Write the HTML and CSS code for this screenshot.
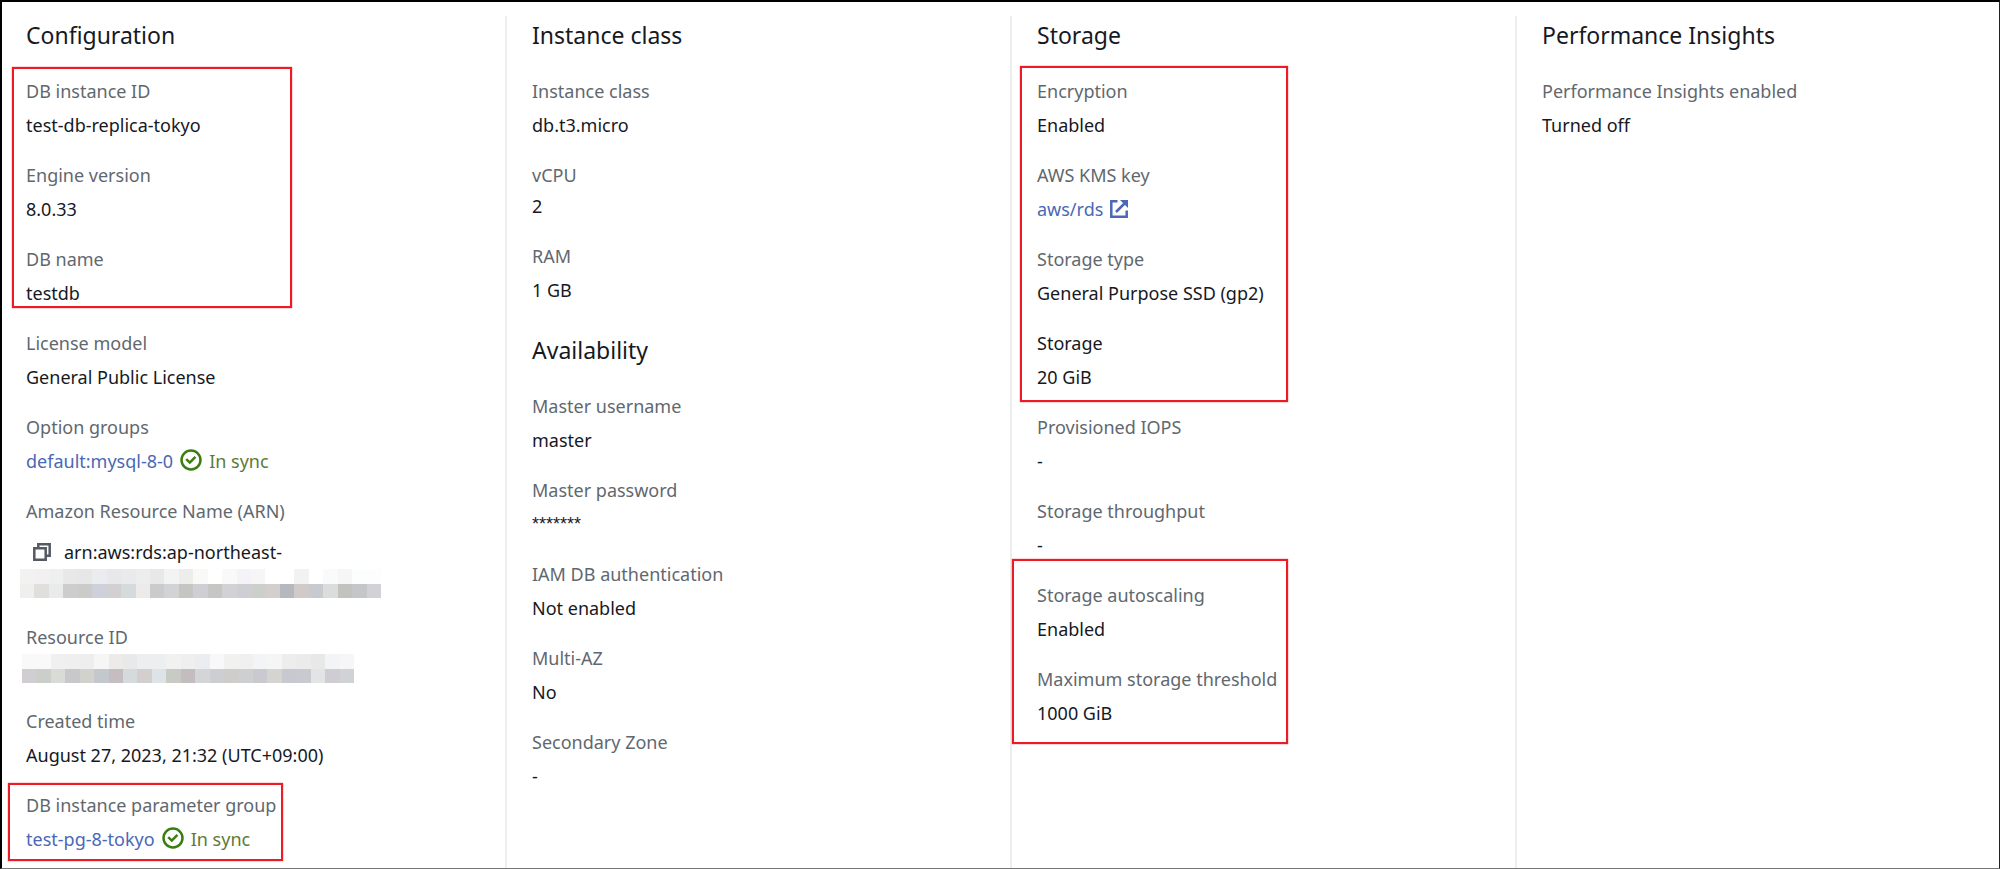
FILE: index.html
```html
<!DOCTYPE html>
<html lang="en">
<head>
    <meta charset="UTF-8">
    <meta name="viewport" content="width=device-width, initial-scale=1.0">
    <title>DB instance configuration</title>
    <link rel="stylesheet" href="styles.css">
</head>
<body>
    <svg class="sprite" aria-hidden="true">
        <symbol id="icon-check" viewBox="0 0 22 22">
            <circle cx="11" cy="11" r="9.5" />
            <path d="M6.2 10.2l3.6 3.4 5.6-5.8" />
        </symbol>
        <symbol id="icon-external" viewBox="0 0 18 18">
            <path d="M7.5 1.3H1.3v15.4h15.4v-6.2M6 12l9-9" />
            <path d="M10 0h8v8z" fill="currentColor" stroke="none" />
        </symbol>
        <symbol id="icon-copy" viewBox="0 0 18 18">
            <path d="M1.3 5.3h11.4v11.4H1.3zM5.3 5V1.3h11.4v11.4H13" />
        </symbol>
    </svg>

    <main class="panel">
        <section class="column">
            <h2>Configuration</h2>
            <dl>
                <div class="group mark mark-instance">
                    <div class="field"><dt>DB instance ID</dt><dd>test-db-replica-tokyo</dd></div>
                    <div class="field"><dt>Engine version</dt><dd>8.0.33</dd></div>
                    <div class="field"><dt>DB name</dt><dd>testdb</dd></div>
                </div>
                <div class="field"><dt>License model</dt><dd>General Public License</dd></div>
                <div class="field">
                    <dt>Option groups</dt>
                    <dd><a href="#">default:mysql-8-0</a><span class="status"><svg class="icon-check"><use href="#icon-check" /></svg>In sync</span></dd>
                </div>
                <div class="field">
                    <dt>Amazon Resource Name (ARN)</dt>
                    <dd class="arn">
                        <span class="arn-text"><button type="button" class="copy" aria-label="Copy ARN"><svg class="icon-copy"><use href="#icon-copy" /></svg></button>arn:aws:rds:ap-northeast-</span>
                        <svg class="mosaic mosaic-arn" id="arnMosaic" aria-hidden="true"></svg>
                    </dd>
                </div>
                <div class="field">
                    <dt>Resource ID</dt>
                    <dd><svg class="mosaic mosaic-id" id="idMosaic" aria-hidden="true"></svg></dd>
                </div>
                <div class="field"><dt>Created time</dt><dd>August 27, 2023, 21:32 (UTC+09:00)</dd></div>
                <div class="group mark mark-params">
                    <div class="field">
                        <dt>DB instance parameter group</dt>
                        <dd><a href="#">test-pg-8-tokyo</a><span class="status"><svg class="icon-check"><use href="#icon-check" /></svg>In sync</span></dd>
                    </div>
                </div>
            </dl>
        </section>

        <section class="column">
            <h2>Instance class</h2>
            <dl>
                <div class="field"><dt>Instance class</dt><dd>db.t3.micro</dd></div>
                <div class="field compact"><dt>vCPU</dt><dd>2</dd></div>
                <div class="field"><dt>RAM</dt><dd>1 GB</dd></div>
            </dl>
            <h2 class="subheading">Availability</h2>
            <dl>
                <div class="field"><dt>Master username</dt><dd>master</dd></div>
                <div class="field"><dt>Master password</dt><dd class="password">*******</dd></div>
                <div class="field"><dt>IAM DB authentication</dt><dd>Not enabled</dd></div>
                <div class="field"><dt>Multi-AZ</dt><dd>No</dd></div>
                <div class="field"><dt>Secondary Zone</dt><dd>-</dd></div>
            </dl>
        </section>

        <section class="column">
            <h2>Storage</h2>
            <dl>
                <div class="group mark mark-storage">
                    <div class="field"><dt>Encryption</dt><dd>Enabled</dd></div>
                    <div class="field">
                        <dt>AWS KMS key</dt>
                        <dd><a href="#" class="external">aws/rds<svg class="icon-external"><use href="#icon-external" /></svg></a></dd>
                    </div>
                    <div class="field"><dt>Storage type</dt><dd>General Purpose SSD (gp2)</dd></div>
                    <div class="field"><dt class="strong">Storage</dt><dd>20 GiB</dd></div>
                </div>
                <div class="field"><dt>Provisioned IOPS</dt><dd>-</dd></div>
                <div class="field"><dt>Storage throughput</dt><dd>-</dd></div>
                <div class="group mark mark-scaling">
                    <div class="field"><dt>Storage autoscaling</dt><dd>Enabled</dd></div>
                    <div class="field"><dt>Maximum storage threshold</dt><dd>1000 GiB</dd></div>
                </div>
            </dl>
        </section>

        <section class="column">
            <h2>Performance Insights</h2>
            <dl>
                <div class="field"><dt>Performance Insights enabled</dt><dd>Turned off</dd></div>
            </dl>
        </section>
    </main>

    <script src="script.js"></script>
</body>
</html>
```
FILE: styles.css
```css
*, *::after {
    box-sizing: border-box;
}
body {
    margin: 0;
    background-color: #ffffff;
    color: #16191f;
    font-family: "Noto Sans", sans-serif;
    font-size: 18px;
    line-height: 28px;
}
.sprite {
    display: none;
}
.panel {
    display: grid;
    grid-template-columns: 505fr 505fr 505fr 482fr;
    min-height: 100vh;
    padding-top: 14px;
    border: 2px solid #000000;
    border-right: 1px solid #222222;
    border-bottom: 1px solid #777777;
}
.column {
    padding-left: 25px;
    border-right: 2px solid #eeeeee;
}
.column:first-child {
    padding-left: 24px;
}
.column:last-child {
    border-right: none;
}
h2 {
    margin: 0 0 23px;
    font-size: 23px;
    font-weight: 400;
    line-height: 38px;
}
.subheading {
    margin-top: 27px;
}
dl, dd {
    margin: 0;
}
dl, .group {
    display: flex;
    flex-direction: column;
    gap: 22px;
}
.field {
    display: flex;
    flex-direction: column;
    gap: 6px;
}
.compact {
    gap: 3px;
}
dt {
    color: #5f686f;
}
.strong {
    color: #16191f;
}
dd {
    height: 28px;
}
a {
    color: #4a68b5;
    text-decoration: none;
}
svg {
    fill: none;
    stroke: currentColor;
    stroke-width: 2.5;
}
.password {
    font-family: "Liberation Sans", Arial, sans-serif;
}
.status {
    color: #5d7a35;
}
.icon-check {
    width: 22px;
    height: 22px;
    margin: 0 7px;
    color: #3c7d12;
    vertical-align: -3px;
}
.icon-external {
    width: 18px;
    height: 18px;
    margin-left: 7px;
    vertical-align: -2px;
}
.arn {
    display: flex;
    flex-direction: column;
    gap: 3px;
    height: 70px;
    padding-top: 7px;
}
.arn-text {
    display: flex;
    align-items: center;
}
.copy {
    display: flex;
    padding: 0 13px 0 7px;
    border: none;
    background: none;
    color: #545b64;
}
.icon-copy {
    width: 18px;
    height: 18px;
}
/* Masked identifiers */
.mosaic {
    display: block;
    height: 29px;
    stroke: none;
}
.mosaic-arn {
    width: 361px;
    margin-left: -6px;
}
.mosaic-id {
    width: 332px;
    margin-top: -3px;
    margin-left: -4px;
}
/* Red marker boxes, drawn over the fields */
.mark {
    position: relative;
}
.mark::after {
    content: "";
    position: absolute;
    border: 2px solid #ed1c24;
    box-shadow: 0 0 1px #ed1c24;
    pointer-events: none;
}
.mark-instance::after {
    top: -10px;
    bottom: -1px;
    left: -14px;
    width: 280px;
}
.mark-params::after {
    top: -8px;
    bottom: -8px;
    left: -18px;
    width: 275px;
}
.mark-storage::after {
    top: -11px;
    bottom: -11px;
    left: -17px;
    width: 268px;
}
.mark-scaling::after {
    top: -22px;
    bottom: -17px;
    left: -25px;
    width: 276px;
}
```
FILE: script.js
```js
const mosaics = {
    arnMosaic: [
        ['#f2f2f2', '#f2f0f0', '#eef0ef', '#e8e8e8', '#e7e7e7', '#ebecef', '#e8e8ea', '#e9eaec', '#ededed', '#e8e8e8', '#f3f3f3', '#ededeb', '#f9f9f7', '#ffffff', '#f9f9f7', '#f5f3f7', '#f6f6f6', '#ffffff', '#ffffff', '#f2f2f2', '#ffffff', '#f9fbfa', '#f6f6f6', '#fcfefe', '#fdfdfd'],
        ['#efefed', '#e0dfdd', '#e9ebea', '#cdcdcd', '#cbcbc9', '#ced1d9', '#d3d0d1', '#d5dadd', '#edebe9', '#cbcbcd', '#d2d3d5', '#c5c5c2', '#cfced5', '#c6c6c4', '#d2d1d6', '#d0ced5', '#cccfca', '#d3cfcd', '#b6b7bf', '#d0cbc8', '#c9cad0', '#dadddb', '#c2c2bf', '#c5c6c8', '#d1d1d7']
    ],
    idMosaic: [
        ['#f9f9f9', '#f9f9f9', '#f0f0f0', '#efefef', '#eeeeee', '#f6f6f6', '#edebe9', '#e9e9e9', '#edeef0', '#edeeef', '#f1f1f1', '#efefef', '#ecedf0', '#f8f8f8', '#f1f1ef', '#f0f0f0', '#f3f4f6', '#f5f5f5', '#ededed', '#ebebeb', '#e8e8e8', '#f3f4f6', '#f6f6f6'],
        ['#d0cdd3', '#ccceca', '#d9dbd7', '#c8c8cb', '#d2d2cc', '#c3c8cc', '#c5bdbf', '#d5dadd', '#d3cfcf', '#dde3e6', '#c8cac4', '#c3bdc0', '#d3d5d7', '#cdced1', '#cfcccc', '#cecfd1', '#cac9cf', '#d5d4d1', '#c8c9d0', '#c9c9cf', '#e3e4e6', '#cfccd3', '#d1d2d6']
    ]
};

function drawMosaic(id, rows) {
    const svg = document.getElementById(id);
    svg.setAttribute('viewBox', `0 0 ${rows[0].length} 2`);
    svg.setAttribute('preserveAspectRatio', 'none');
    svg.setAttribute('shape-rendering', 'crispEdges');
    rows.forEach((row, y) => {
        row.forEach((color, x) => {
            const cell = document.createElementNS('http://www.w3.org/2000/svg', 'rect');
            cell.setAttribute('x', x);
            cell.setAttribute('y', y);
            cell.setAttribute('width', 1);
            cell.setAttribute('height', 1);
            cell.setAttribute('fill', color);
            svg.appendChild(cell);
        });
    });
}

for (const id in mosaics) {
    drawMosaic(id, mosaics[id]);
}
```
